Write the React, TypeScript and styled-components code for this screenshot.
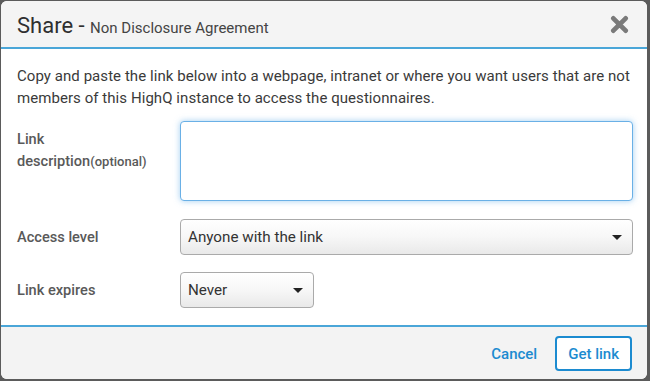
import styled, { createGlobalStyle } from "styled-components";

const GlobalStyle = createGlobalStyle`
  html, body {
    margin: 0;
    padding: 0;
    background: #5b5b5b;
  }
  * {
    box-sizing: border-box;
  }
`;

const Backdrop = styled.div`
  width: 650px;
  height: 381px;
  padding: 1px 3px 2px 1px;
  font-family: Roboto, "Liberation Sans", sans-serif;
`;

const Dialog = styled.div`
  height: 100%;
  display: flex;
  flex-direction: column;
  background: #fff;
  border-radius: 6px;
  overflow: hidden;
`;

const Header = styled.div`
  height: 48px;
  flex: none;
  display: flex;
  align-items: center;
  justify-content: space-between;
  padding: 0 18px 0 16px;
  background: #f4f4f4;
  border-bottom: 2px solid #4aa6d8;
`;

const Title = styled.h2`
  margin: 0;
  font-size: 22px;
  font-weight: 400;
  color: #2f2f2f;
  padding-top: 2px;
`;

const Subtitle = styled.span`
  font-size: 15px;
  color: #444;
`;

const CloseButton = styled.button`
  border: none;
  background: none;
  padding: 0;
  width: 20px;
  height: 20px;
  display: flex;
  align-items: center;
  justify-content: center;
  cursor: pointer;
`;

const Body = styled.div`
  flex: 1;
  padding: 16px 12px 0 16px;
`;

const Intro = styled.p`
  margin: 0 0 12px 0;
  font-size: 15px;
  letter-spacing: 0.06px;
  line-height: 22px;
  color: #3a3a3a;
`;

const FormRow = styled.div<{ $gap?: number }>`
  display: grid;
  grid-template-columns: 163px 1fr;
  align-items: ${(p) => (p.$gap ? "center" : "start")};
  margin-bottom: ${(p) => p.$gap ?? 18}px;
`;

const Label = styled.label<{ $top?: number }>`
  font-size: 14.6px;
  font-weight: 500;
  color: #595959;
  line-height: 22px;
  padding-top: ${(p) => p.$top ?? 0}px;
`;

const Optional = styled.span`
  font-size: 13px;
`;

const TextArea = styled.textarea`
  width: 453px;
  height: 80px;
  resize: none;
  border: 1px solid #6ab0e6;
  border-radius: 4px;
  box-shadow: 0 0 6px rgba(102, 175, 233, 0.6);
  outline: none;
  font-family: inherit;
  font-size: 15px;
  padding: 6px 8px;
`;

const SelectBox = styled.div<{ $width: number }>`
  width: ${(p) => p.$width}px;
  height: 36px;
  display: flex;
  align-items: center;
  justify-content: space-between;
  padding: 0 10px 0 7px;
  border: 1px solid #aaa;
  border-radius: 4px;
  background: linear-gradient(#ffffff 0%, #f7f7f7 50%, #e9e9e9 100%);
  font-size: 15.2px;
  color: #333;
`;

const Caret = styled.span`
  width: 0;
  height: 0;
  border-left: 5px solid transparent;
  border-right: 5px solid transparent;
  border-top: 5px solid #222;
`;

const Footer = styled.div`
  height: 55px;
  flex: none;
  display: flex;
  align-items: center;
  justify-content: flex-end;
  gap: 18px;
  padding: 0 15px 0 0;
  background: #f3f3f3;
  border-top: 2px solid #4aa6d8;
`;

const FooterButton = styled.button<{ $outlined?: boolean }>`
  font-family: inherit;
  font-size: 15px;
  font-weight: 500;
  color: #1c8bd0;
  background: ${(p) => (p.$outlined ? "#fff" : "transparent")};
  border: ${(p) => (p.$outlined ? "2px solid #1c8bd0" : "none")};
  border-radius: 4px;
  height: 35px;
  padding: 0 ${(p) => (p.$outlined ? 11 : 0)}px;
  cursor: pointer;
`;

export default function App() {
  return (
    <>
      <GlobalStyle />
      <Backdrop>
        <Dialog>
          <Header>
            <Title>
              Share - <Subtitle>Non Disclosure Agreement</Subtitle>
            </Title>
            <CloseButton aria-label="Close">
              <svg width="19" height="19" viewBox="0 0 20 20">
                <path
                  d="M3.5 3.5 L16.5 16.5 M16.5 3.5 L3.5 16.5"
                  stroke="#7a7a7a"
                  strokeWidth="5"
                  strokeLinecap="round"
                />
              </svg>
            </CloseButton>
          </Header>

          <Body>
            <Intro>
              Copy and paste the link below into a webpage, intranet or where you
              want users that are not members of this HighQ instance to access
              the questionnaires.
            </Intro>

            <FormRow>
              <Label $top={7}>
                Link
                <br />
                description<Optional>(optional)</Optional>
              </Label>
              <TextArea />
            </FormRow>

            <FormRow $gap={17}>
              <Label>Access level</Label>
              <SelectBox $width={453}>
                Anyone with the link
                <Caret />
              </SelectBox>
            </FormRow>

            <FormRow $gap={17}>
              <Label>Link expires</Label>
              <SelectBox $width={134}>
                Never
                <Caret />
              </SelectBox>
            </FormRow>
          </Body>

          <Footer>
            <FooterButton>Cancel</FooterButton>
            <FooterButton $outlined>Get link</FooterButton>
          </Footer>
        </Dialog>
      </Backdrop>
    </>
  );
}
